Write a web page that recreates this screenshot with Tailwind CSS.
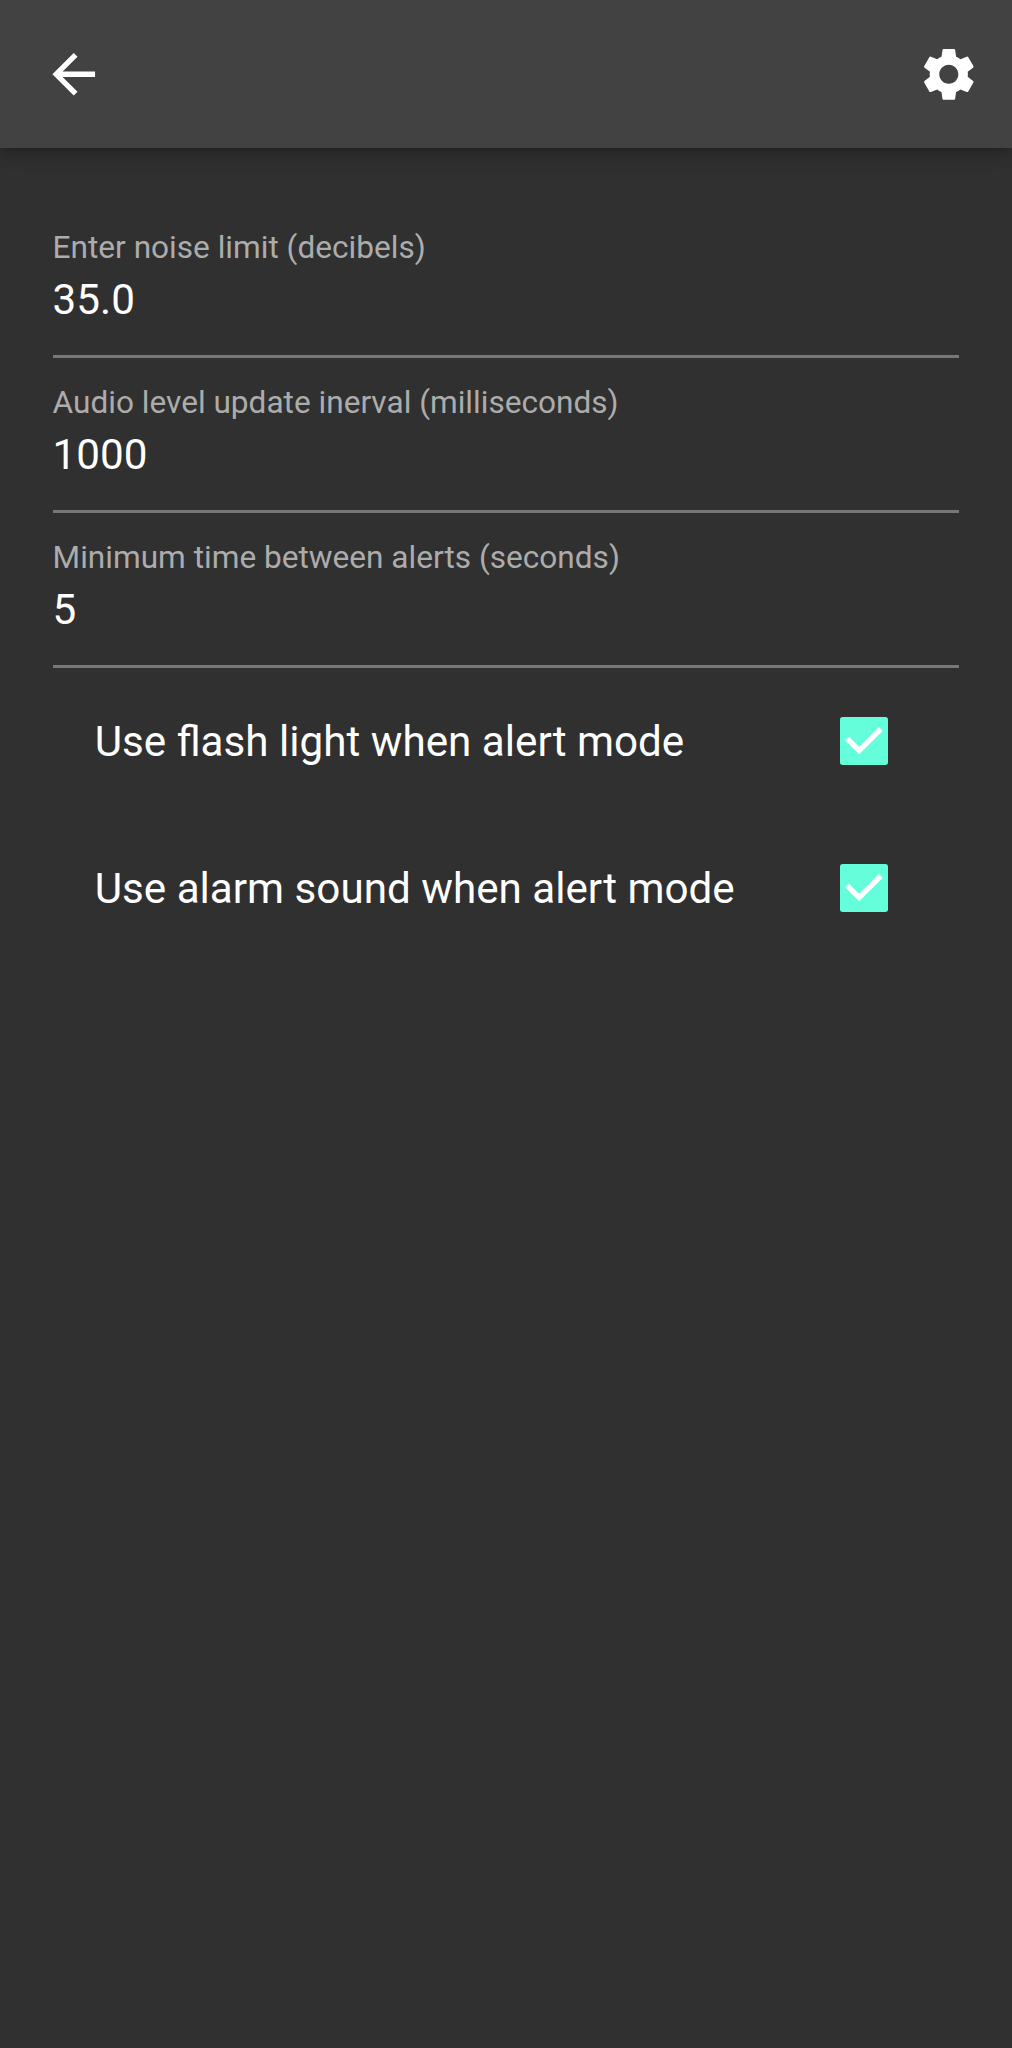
<!DOCTYPE html>
<html lang="en">
<head>
<meta charset="utf-8">
<title>Settings</title>
<script src="https://cdn.jsdelivr.net/npm/@tailwindcss/browser@4"></script>
</head>
<body class="bg-[#303030] text-white font-[Roboto,sans-serif] min-h-screen">
<header class="relative h-[147.8px] bg-[#424242] flex items-center justify-between pl-[42px] pr-[31.6px] shadow-[0_5px_10px_-2px_rgba(0,0,0,0.2),0_10px_13px_0_rgba(0,0,0,0.08),0_3px_26px_0_rgba(0,0,0,0.06)]">
  <button aria-label="Back"><svg class="block w-[64px] h-[64px]" viewBox="0 0 24 24" fill="currentColor"><path transform="translate(-.1 .1)" d="M20 11H7.83l5.59-5.59L12 4l-8 8 8 8 1.41-1.41L7.83 13H20v-2z"/></svg></button>
  <button aria-label="Settings"><svg class="block w-[63.6px] h-[63.6px]" viewBox="0 0 24 24" fill="currentColor"><path transform="translate(0 .2)" d="M19.14 12.94c.04-.3.06-.61.06-.94 0-.32-.02-.64-.07-.94l2.03-1.58c.18-.14.23-.41.12-.61l-1.92-3.32c-.12-.22-.37-.29-.59-.22l-2.39.96c-.5-.38-1.03-.7-1.62-.94l-.36-2.54c-.04-.24-.24-.41-.48-.41h-3.84c-.24 0-.43.17-.47.41l-.36 2.54c-.59.24-1.13.57-1.62.94l-2.39-.96c-.22-.08-.47 0-.59.22L2.74 8.87c-.12.21-.08.47.12.61l2.03 1.58c-.05.3-.09.63-.09.94s.02.64.07.94l-2.03 1.58c-.18.14-.23.41-.12.61l1.92 3.32c.12.22.37.29.59.22l2.39-.96c.5.38 1.03.7 1.62.94l.36 2.54c.05.24.24.41.48.41h3.84c.24 0 .44-.17.47-.41l.36-2.54c.59-.24 1.13-.56 1.62-.94l2.39.96c.22.08.47 0 .59-.22l1.92-3.32c.12-.22.07-.47-.12-.61l-2.01-1.58zM12 15.6c-1.98 0-3.6-1.62-3.6-3.6s1.62-3.6 3.6-3.6 3.6 1.62 3.6 3.6-1.62 3.6-3.6 3.6z"/></svg></button>
</header>
<main class="pt-[55px]">
  <section class="px-[52.6px]">
    <div class="h-[155.2px] pt-[26px] flex flex-col border-b-3 border-[#777777]">
      <label class="text-[31.6px] leading-[37px] text-[#acacac]">Enter noise limit (decibels)</label>
      <div class="mt-[9px] text-[42.2px] leading-[50px]">35.0</div>
    </div>
    <div class="h-[155.2px] pt-[26px] flex flex-col border-b-3 border-[#777777]">
      <label class="text-[31.6px] leading-[37px] text-[#acacac]">Audio level update inerval (milliseconds)</label>
      <div class="mt-[9px] text-[42.2px] leading-[50px]">1000</div>
    </div>
    <div class="h-[155.2px] pt-[26px] flex flex-col border-b-3 border-[#777777]">
      <label class="text-[31.6px] leading-[37px] text-[#acacac]">Minimum time between alerts (seconds)</label>
      <div class="mt-[9px] text-[42.2px] leading-[50px]">5</div>
    </div>
  </section>
  <section class="-mt-px pl-[94.7px] pr-[123.8px]">
    <div class="h-[147.2px] flex items-center justify-between">
      <span class="pt-0.5 text-[42.2px] leading-[50px]">Use flash light when alert mode</span>
      <svg class="block w-12 h-12" viewBox="0 0 18 18"><rect width="18" height="18" rx="1" fill="#64ffda"/><path d="M2.7 8.1 7.2 12.6 15.3 4.5" fill="none" stroke="#fff" stroke-width="2"/></svg>
    </div>
    <div class="h-[147.2px] flex items-center justify-between">
      <span class="pt-0.5 text-[42.2px] leading-[50px]">Use alarm sound when alert mode</span>
      <svg class="block w-12 h-12" viewBox="0 0 18 18"><rect width="18" height="18" rx="1" fill="#64ffda"/><path d="M2.7 8.1 7.2 12.6 15.3 4.5" fill="none" stroke="#fff" stroke-width="2"/></svg>
    </div>
  </section>
</main>
</body>
</html>
